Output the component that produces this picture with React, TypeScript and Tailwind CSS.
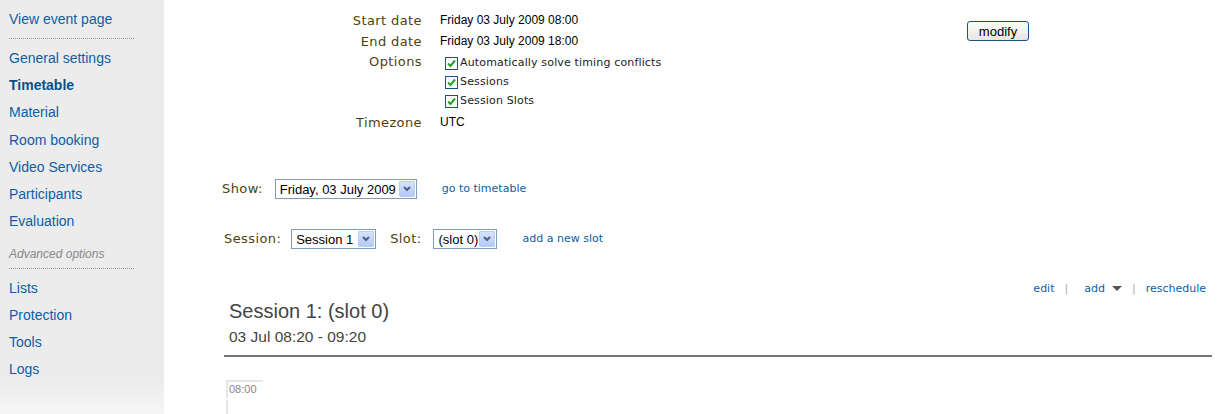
import React from 'react';

const sideFont = { fontFamily: '"Liberation Sans", Arial, sans-serif' };

const Check = () => (
  <span className="inline-flex h-[13px] w-[13px] shrink-0 items-center justify-center border border-[#1c5180] bg-white">
    <svg width="9" height="9" viewBox="0 0 9 9">
      <path d="M1 4.5 L3.5 7 L8 1.5" fill="none" stroke="#21a121" strokeWidth="2" />
    </svg>
  </span>
);

const Select = ({ label, width }: { label: string; width: string }) => (
  <span
    className={`inline-flex h-[20px] ${width} items-center justify-between border border-[#7f9db9] bg-white pl-[4px] pr-[1px] text-[13px] text-black font-['Liberation_Sans',Arial,sans-serif]`}
  >
    <span className="leading-none">{label}</span>
    <span className="flex h-[16px] w-[16px] items-center justify-center rounded-[1px] border border-[#b8cdf5] bg-gradient-to-b from-[#d7e3fc] to-[#b4c9f6]">
      <svg width="8" height="6" viewBox="0 0 8 6">
        <path d="M1 1 L4 4 L7 1" fill="none" stroke="#4d6185" strokeWidth="2" />
      </svg>
    </span>
  </span>
);

const sideLinks1 = ['General settings', 'Timetable', 'Material', 'Room booking', 'Video Services', 'Participants', 'Evaluation'];
const sideLinks2 = ['Lists', 'Protection', 'Tools', 'Logs'];

const Sidebar = () => (
  <aside className="flex h-[414px] w-[164px] shrink-0 flex-col bg-[#ececec] bg-gradient-to-b from-[#ececec] from-[92%] to-[#f6f6f6] pl-[9px] pt-[9px]" style={sideFont}>
    <a className="text-[14px] leading-[20px] text-[#0b5ea8]">View event page</a>
    <div className="mt-[9px] w-[125px] border-t border-dotted border-[#999]" />
    <ul className="mt-[9px] flex flex-col">
      {sideLinks1.map((l) => (
        <li
          key={l}
          className={`h-[27.2px] text-[14px] leading-[20px] ${l === 'Timetable' ? 'font-bold text-[#0b4f8a]' : 'text-[#0b5ea8]'}`}
        >
          {l}
        </li>
      ))}
    </ul>
    <div className="mt-[8px] text-[12px] italic leading-[16px] text-[#888]">Advanced options</div>
    <div className="mt-[6px] w-[125px] border-t border-dotted border-[#999]" />
    <ul className="mt-[9px] flex flex-col">
      {sideLinks2.map((l) => (
        <li key={l} className="h-[27px] text-[14px] leading-[20px] text-[#0b5ea8]">
          {l}
        </li>
      ))}
    </ul>
  </aside>
);

const label = "text-[13px] tracking-[0.4px] text-[#4f3f0f] font-['DejaVu_Sans',Verdana,sans-serif]";
const value = "text-[12px] text-black font-['Liberation_Sans',Arial,sans-serif]";
const small = "text-[11px] font-['DejaVu_Sans',Verdana,sans-serif]";

const App = () => {
  return (
    <div className="flex h-[414px] w-[1221px] overflow-hidden bg-white">
      <Sidebar />
      <main className="flex-1">
        {/* event dates */}
        <div className="flex items-start pt-[10px]">
          <div className="grid w-[803px] grid-cols-[258px_527px] gap-x-[18px]">
            <div className={`${label} h-[21px] text-right leading-[21px]`}>Start date</div>
            <div className={`${value} leading-[21px]`}>Friday 03 July 2009 08:00</div>
            <div className={`${label} h-[21px] text-right leading-[21px]`}>End date</div>
            <div className={`${value} leading-[21px]`}>Friday 03 July 2009 18:00</div>
            <div className={`${label} pt-[1px] text-right leading-[18px]`}>Options</div>
            <div className="flex flex-col pt-[2px] pb-[1px]">
              {['Automatically solve timing conflicts', 'Sessions', 'Session Slots'].map((o) => (
                <label key={o} className={`flex h-[19px] items-center gap-[2px] pl-[5px] tracking-[0.15px] text-[#222] ${small}`}>
                  <Check />
                  {o}
                </label>
              ))}
            </div>
            <div className={`${label} h-[21px] text-right leading-[21px]`}>Timezone</div>
            <div className={`${value} leading-[21px]`}>UTC</div>
          </div>
          <button className="mt-[11px] flex h-[20px] w-[62px] items-center justify-center rounded-[3px] border border-[#1c4f85] bg-gradient-to-b from-[#fdfdfb] to-[#e8e6dc] text-[13px] leading-none text-black font-['Liberation_Sans',Arial,sans-serif]">
            modify
          </button>
        </div>

        {/* filters */}
        <div className="mt-[46px] flex items-center pl-[58px]">
          <span className={label}>Show:</span>
          <span className="ml-[12px] flex">
            <Select label="Friday, 03 July 2009" width="w-[142px]" />
          </span>
          <a className={`ml-[25px] text-[#0b5ea8] ${small}`}>go to timetable</a>
        </div>
        <div className="mt-[30px] flex items-center pl-[60px]">
          <span className={label}>Session:</span>
          <span className="ml-[10px] flex">
            <Select label="Session 1" width="w-[85px]" />
          </span>
          <span className={`ml-[14px] ${label}`}>Slot:</span>
          <span className="ml-[12px] flex">
            <Select label="(slot 0)" width="w-[64px]" />
          </span>
          <a className={`ml-[25px] text-[#0b5ea8] ${small}`}>add a new slot</a>
        </div>

        {/* slot */}
        <div className="mt-[32px] pl-[60px] pr-[9px]">
          <div className={`flex h-[16px] items-center justify-end pr-[6px] text-[#0b5ea8] ${small}`}>
            <a>edit</a>
            <span className="mx-[10px] text-[#aaa]">|</span>
            <a className="ml-[6px]">add</a>
            <svg className="ml-[7px]" width="10" height="6" viewBox="0 0 10 6">
              <path d="M0 0 L10 0 L5 5 Z" fill="#555" />
            </svg>
            <span className="mx-[10px] text-[#aaa]">|</span>
            <a>reschedule</a>
          </div>
          <h2 className="mt-[3px] pl-[5px] text-[20px] leading-[22px] text-[#444] font-['Liberation_Sans',Arial,sans-serif]">
            Session 1: (slot 0)
          </h2>
          <div className="mt-[6px] pl-[5px] text-[15.5px] leading-[18px] text-[#444] font-['Liberation_Sans',Arial,sans-serif]">
            03 Jul 08:20 - 09:20
          </div>
          <div className="mt-[9px] h-[2px] bg-[#777]" />
          <div className="ml-[2px] mt-[23px] flex flex-col">
            <div className="h-[18px] w-[37px] border-l-2 border-t-2 border-[#e6e6e6] pl-[1px] text-[11px] leading-[15px] text-[#888] font-['Liberation_Sans',Arial,sans-serif]">
              08:00
            </div>
            <div className="mt-[2px] h-[20px] border-l-2 border-[#e6e6e6]" />
          </div>
        </div>
      </main>
    </div>
  );
};

export default App;
